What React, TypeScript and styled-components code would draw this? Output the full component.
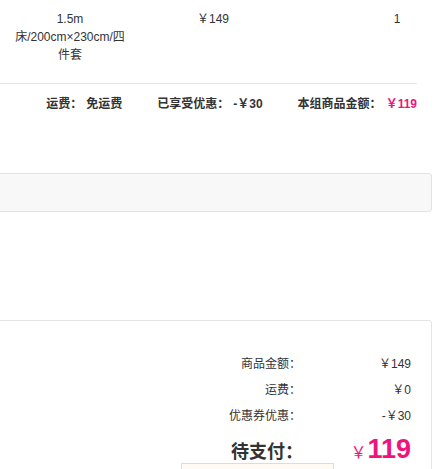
import styled, { createGlobalStyle } from 'styled-components';

const GlobalStyle = createGlobalStyle`
  html, body {
    margin: 0;
    padding: 0;
    background: #fff;
  }
  body {
    font-family: "Liberation Sans", "Noto Sans CJK SC", sans-serif;
    font-size: 12px;
    color: #333;
    overflow: hidden;
  }
`;

const Page = styled.div`
  position: relative;
  width: 437px;
  height: 469px;
  overflow: hidden;
`;

const ProductRow = styled.div`
  display: flex;
  width: 417px;
  height: 84px;
  padding-top: 10px;
  box-sizing: border-box;
  border-bottom: 1px solid #e5e5e5;
`;

const Cell = styled.div<{ $width?: number }>`
  width: ${(p) => (p.$width ? `${p.$width}px` : 'auto')};
  flex: ${(p) => (p.$width ? 'none' : '1')};
  text-align: center;
  line-height: 18px;
`;

const SpecText = styled.div`
  width: 120px;
  margin: 0 auto;
`;

const GroupSummary = styled.div`
  display: flex;
  justify-content: flex-end;
  gap: 35px;
  width: 417px;
  height: 40px;
  line-height: 40px;
  font-weight: bold;
  color: #333;
`;

const SummaryItem = styled.span`
  white-space: nowrap;
`;

const Amount = styled.span<{ $pink?: boolean }>`
  margin-left: 4px;
  color: ${(p) => (p.$pink ? '#f0137c' : '#333')};
`;

const NoteBar = styled.div`
  margin: 49px 5px 0 -10px;
  height: 39px;
  box-sizing: border-box;
  background: #f8f8f8;
  border: 1px solid #e3e3e3;
  border-radius: 3px;
`;

const OrderBox = styled.div`
  margin: 108px 5px 0 -10px;
  height: 200px;
  box-sizing: border-box;
  border: 1px solid #e5e5e5;
  border-radius: 3px 3px 0 0;
  padding: 30px 20px 0 0;
`;

const PriceRow = styled.div`
  display: flex;
  justify-content: flex-end;
  line-height: 26px;
`;

const PriceLabel = styled.span`
  text-align: right;
  margin-right: -4px;
`;

const PriceValue = styled.span`
  width: 114px;
  text-align: right;
`;

const TotalRow = styled.div`
  display: flex;
  justify-content: flex-end;
  align-items: baseline;
  height: 40px;
  line-height: 40px;
`;

const TotalLabel = styled.span`
  font-size: 18px;
  font-weight: bold;
  color: #333;
  margin-right: -6px;
`;

const TotalValue = styled.span`
  width: 114px;
  text-align: right;
  color: #f0137c;
  font-weight: bold;
  font-size: 27px;
`;

const Yen = styled.span`
  font-size: 16px;
  font-weight: normal;
  margin-right: 1px;
`;

const Tip = styled.div`
  position: absolute;
  left: 181px;
  top: 463px;
  width: 153px;
  height: 30px;
  box-sizing: border-box;
  background: #fffaf3;
  border: 1px solid #f6d8ae;
`;

const prices = [
  { label: '商品金额：', value: '￥149' },
  { label: '运费：', value: '￥0' },
  { label: '优惠券优惠：', value: '-￥30' },
];

export default function App() {
  return (
    <Page>
      <GlobalStyle />
      <ProductRow>
        <Cell $width={140}>
          <SpecText>1.5m 床/200cm×230cm/四件套</SpecText>
        </Cell>
        <Cell $width={146}>￥149</Cell>
        <Cell />
        <Cell $width={40}>1</Cell>
      </ProductRow>
      <GroupSummary>
        <SummaryItem>
          运费：<Amount>免运费</Amount>
        </SummaryItem>
        <SummaryItem>
          已享受优惠：<Amount>-￥30</Amount>
        </SummaryItem>
        <SummaryItem>
          本组商品金额：<Amount $pink>￥119</Amount>
        </SummaryItem>
      </GroupSummary>
      <NoteBar />
      <OrderBox>
        {prices.map((p) => (
          <PriceRow key={p.label}>
            <PriceLabel>{p.label}</PriceLabel>
            <PriceValue>{p.value}</PriceValue>
          </PriceRow>
        ))}
        <TotalRow>
          <TotalLabel>待支付：</TotalLabel>
          <TotalValue>
            <Yen>￥</Yen>119
          </TotalValue>
        </TotalRow>
      </OrderBox>
      <Tip />
    </Page>
  );
}
